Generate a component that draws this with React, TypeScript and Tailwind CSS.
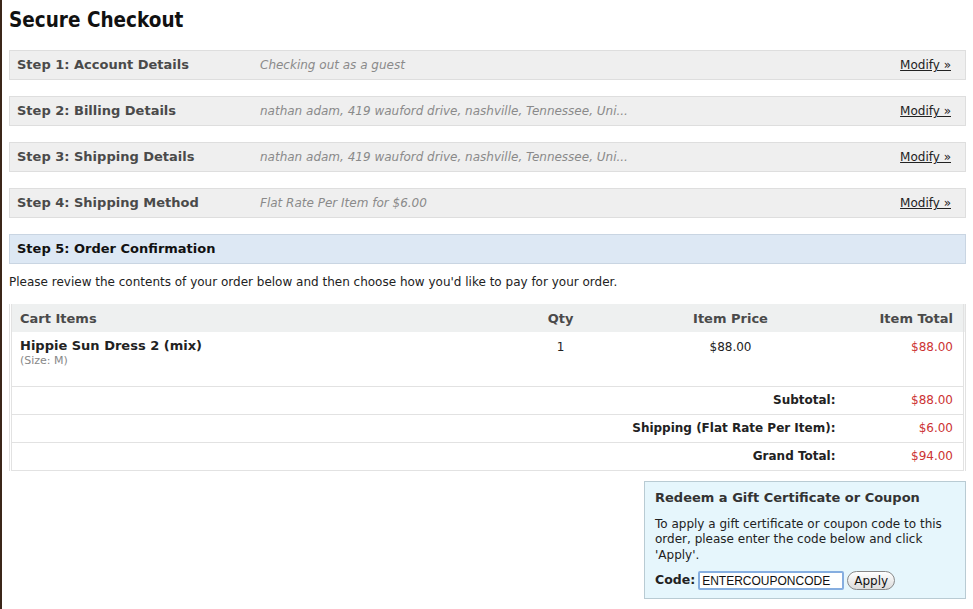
import React from 'react'

const steps = [
  { label: 'Step 1: Account Details', desc: 'Checking out as a guest' },
  { label: 'Step 2: Billing Details', desc: 'nathan adam, 419 wauford drive, nashville, Tennessee, Uni...' },
  { label: 'Step 3: Shipping Details', desc: 'nathan adam, 419 wauford drive, nashville, Tennessee, Uni...' },
  { label: 'Step 4: Shipping Method', desc: 'Flat Rate Per Item for $6.00' },
]

const totals = [
  { label: 'Subtotal:', value: '$88.00' },
  { label: 'Shipping (Flat Rate Per Item):', value: '$6.00' },
  { label: 'Grand Total:', value: '$94.00' },
]

export default function App() {
  return (
    <div
      className="min-h-[609px] w-[973px] border-l-[2px] border-[#3b2619] bg-white pl-[7px] pr-[7px] text-[12px] text-[#222]"
      style={{ fontFamily: '"DejaVu Sans", Verdana, sans-serif' }}
    >
      <h1
        className="h-[50px] pt-[5px] text-[20.5px] font-bold leading-[30px] text-[#111]"
        style={{ fontFamily: '"DejaVu Sans Condensed", "DejaVu Sans", sans-serif' }}
      >
        Secure Checkout
      </h1>

      <div className="flex flex-col gap-[16px]">
        {steps.map((s) => (
          <div
            key={s.label}
            className="flex h-[30px] items-center border border-[#dedede] bg-[#efefef] pl-[7px] pr-[14px]"
          >
            <div className="w-[243px] text-[13px] font-bold text-[#4a4a4a]">{s.label}</div>
            <div className="flex-1 text-[12px] italic text-[#8a8a8a]">{s.desc}</div>
            <a href="#" className="text-[12px] text-[#222] underline">
              Modify »
            </a>
          </div>
        ))}
        <div className="flex h-[30px] items-center border border-[#c9d5e2] bg-[#dde8f4] pl-[7px]">
          <div className="text-[13px] font-bold text-[#111]">Step 5: Order Confirmation</div>
        </div>
      </div>

      <p className="mt-[11px] leading-[15px] text-[#222]">
        Please review the contents of your order below and then choose how you'd like to pay for your order.
      </p>

      <table className="mt-[14px] w-full border-collapse border-l-[3px] border-r-[3px] border-double border-[#e2e2e2]">
        <thead>
          <tr className="h-[28px] bg-[#eef0f0] text-[13px] font-bold text-[#4a4a4a]">
            <th className="w-[490px] pl-[8px] pt-[2px] text-left">Cart Items</th>
            <th className="w-[120px] pt-[2px] text-center">Qty</th>
            <th className="w-[220px] pt-[2px] text-center">Item Price</th>
            <th className="pr-[10px] pt-[2px] text-right">Item Total</th>
          </tr>
        </thead>
        <tbody>
          <tr className="h-[54px] border-b border-[#e2e2e2] align-top">
            <td className="pl-[8px] pt-[6px]">
              <div className="text-[13px] font-bold leading-[16px] text-[#222]">Hippie Sun Dress 2 (mix)</div>
              <div className="text-[11px] leading-[14px] text-[#888]">(Size: M)</div>
            </td>
            <td className="pt-[6px] text-center">1</td>
            <td className="pt-[6px] text-center">$88.00</td>
            <td className="pr-[10px] pt-[6px] text-right text-[#cc3333]">$88.00</td>
          </tr>
          {totals.map((t) => (
            <tr key={t.label} className="h-[28px] border-b border-[#e2e2e2]">
              <td colSpan={3} className="pr-[5px] text-right font-bold text-[#222]">
                {t.label}
              </td>
              <td className="pr-[10px] text-right text-[#cc3333]">{t.value}</td>
            </tr>
          ))}
        </tbody>
      </table>

      <div className="ml-auto mt-[10px] w-[322px] border border-[#b9cbd3] bg-[#e6f6fc] px-[10px] pb-[8px] pt-[6px]">
        <div className="text-[13px] font-bold leading-[20px] text-[#333]">Redeem a Gift Certificate or Coupon</div>
        <p className="mt-[9px] leading-[15.5px] text-[#222]">
          To apply a gift certificate or coupon code to this order, please enter the code below and click 'Apply'.
        </p>
        <div className="mt-[8px] flex items-center gap-[3px]">
          <span className="text-[12.5px] font-bold">Code:</span>
          <input
            defaultValue="ENTERCOUPONCODE"
            className="h-[19px] w-[146px] rounded-[2px] border-2 border-[#86aee0] bg-white px-[2px] text-[12px] text-[#111] outline-none"
            style={{ fontFamily: '"Liberation Sans", Arial, sans-serif' }}
          />
          <button className="h-[19px] rounded-full border border-[#888] bg-gradient-to-b from-white to-[#dcdcdc] px-[6px] text-[12px] leading-[16px] text-[#111]">
            Apply
          </button>
        </div>
      </div>
    </div>
  )
}
